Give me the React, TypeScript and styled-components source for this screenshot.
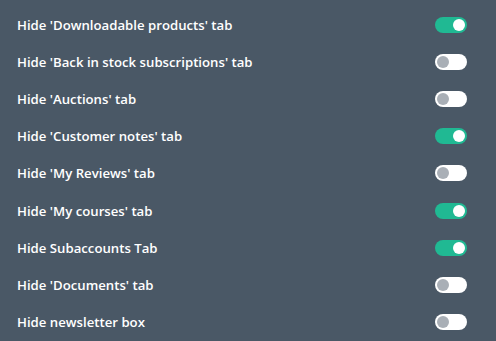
import styled, { createGlobalStyle } from "styled-components";

const GlobalStyle = createGlobalStyle`
    html, body {
        margin: 0;
        padding: 0;
        background: #4a5866;
    }
`;

const Panel = styled.div`
    width: 496px;
    height: 341px;
    box-sizing: border-box;
    padding: 6px 29px 0 17px;
    background: #4a5866;
    font-family: 'Open Sans', 'Liberation Sans', sans-serif;
    display: flex;
    flex-direction: column;
`;

const Row = styled.div`
    height: 38px;
    display: flex;
    align-items: center;
    justify-content: space-between;
`;

const Label = styled.span`
    font-size: 13.2px;
    font-weight: 600;
    color: #ffffff;
`;

const Track = styled.div<{ $on: boolean }>`
    width: 32px;
    height: 16px;
    border-radius: 8px;
    background: ${(p) => (p.$on ? "#20b993" : "#ffffff")};
    position: relative;
    flex-shrink: 0;
`;

const Knob = styled.div<{ $on: boolean }>`
    position: absolute;
    top: 2px;
    left: ${(p) => (p.$on ? "18px" : "2px")};
    width: 12px;
    height: 12px;
    border-radius: 50%;
    background: ${(p) => (p.$on ? "#ffffff" : "#a9afb6")};
`;

const settings = [
    { label: "Hide 'Downloadable products' tab", on: true },
    { label: "Hide 'Back in stock subscriptions' tab", on: false },
    { label: "Hide 'Auctions' tab", on: false },
    { label: "Hide 'Customer notes' tab", on: true },
    { label: "Hide 'My Reviews' tab", on: false },
    { label: "Hide 'My courses' tab", on: true },
    { label: "Hide Subaccounts Tab", on: true },
    { label: "Hide 'Documents' tab", on: false },
    { label: "Hide newsletter box", on: false },
];

function App() {
    return (
        <>
            <GlobalStyle />
            <Panel>
                {settings.map((s) => (
                    <Row key={s.label}>
                        <Label>{s.label}</Label>
                        <Track $on={s.on}>
                            <Knob $on={s.on} />
                        </Track>
                    </Row>
                ))}
            </Panel>
        </>
    );
}

export default App;
